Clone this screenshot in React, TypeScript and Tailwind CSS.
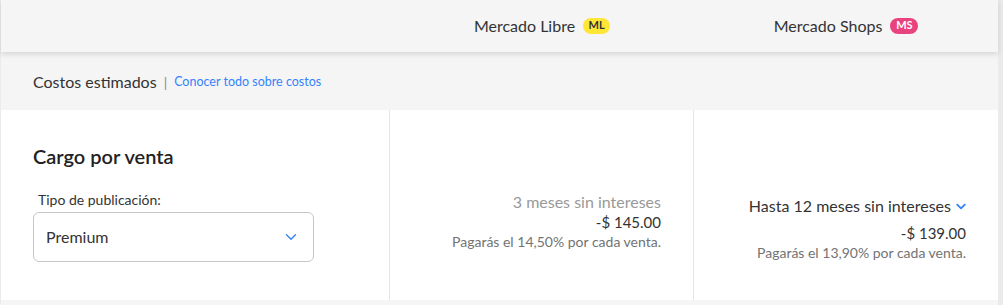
import React from "react";

const font = { fontFamily: "Lato, 'Open Sans', sans-serif" };

function Chevron({ className, sw = 1.4 }: { className?: string; sw?: number }) {
  return (
    <svg viewBox="0 0 12 8" className={className} fill="none" stroke="currentColor" strokeWidth={sw} strokeLinecap="round" strokeLinejoin="round">
      <path d="M1.5 1.8 6 6.2l4.5-4.4" />
    </svg>
  );
}

export default function App() {
  return (
    <div className="w-[1003px] h-[305px] bg-[#ebebeb] overflow-hidden text-[#333]" style={font}>
      <div className="ml-[1px] w-[997px] h-[305px] bg-[#f5f5f5] flex flex-col">
        <div className="relative z-10 h-[52px] shrink-0 bg-[#f5f5f5] shadow-[0_2px_6px_rgba(0,0,0,0.14)] grid grid-cols-[389px_304px_304px]">
          <div />
          <div className="flex items-center justify-center gap-[8px] pb-[1px]">
            <span className="text-[16px]">Mercado Libre</span>
            <span className="h-[16px] w-[27px] rounded-full bg-[#ffe637] text-[11px] font-bold text-[#333] flex items-center justify-center">ML</span>
          </div>
          <div className="flex items-center justify-center gap-[8px] pb-[1px]">
            <span className="text-[16px]">Mercado Shops</span>
            <span className="h-[16px] w-[28px] rounded-full bg-[#e8437f] text-[11px] font-bold text-white flex items-center justify-center">MS</span>
          </div>
        </div>
        <div className="mt-[3px] rounded-t-[6px] bg-[#f5f5f5] flex flex-col">
          <div className="h-[55px] flex items-center pl-[32px] pb-[1px]">
            <span className="text-[16px] text-[#333]">Costos estimados</span>
            <span className="mx-[7px] text-[14px] text-[#888]">|</span>
            <span className="text-[12.5px] text-[#3483fa]">Conocer todo sobre costos</span>
          </div>
          <div className="h-[190px] bg-white grid grid-cols-[389px_304px_304px]">
            <div className="border-r border-[#e5e5e5] pl-[32px] pt-[34px]">
              <div className="text-[20px] font-semibold leading-[24px] text-[#222]">Cargo por venta</div>
              <div className="mt-[24px] ml-[5px] text-[14px] leading-[16px] text-[#333]">Tipo de publicación:</div>
              <div className="mt-[4px] w-[281px] h-[50px] rounded-[6px] border border-[#c7c7c7] flex items-center justify-between pl-[12px] pr-[16px]">
                <span className="text-[16px] text-[#333]">Premium</span>
                <Chevron className="w-[12px] h-[8px] text-[#3483fa]" />
              </div>
            </div>
            <div className="border-r border-[#e5e5e5] pr-[32px] pt-[82px] flex flex-col items-end">
              <div className="text-[16px] leading-[20px] text-[#999]">3 meses sin intereses</div>
              <div className="text-[15px] leading-[20px] text-[#333]">-$ 145.00</div>
              <div className="text-[14px] leading-[20px] text-[#737373]">Pagarás el 14,50% por cada venta.</div>
            </div>
            <div className="pr-[32px] pt-[86px] flex flex-col items-end">
              <div className="flex items-center gap-[5px] text-[16px] leading-[20px] text-[#333]">
                <span>Hasta 12 meses sin intereses</span>
                <Chevron className="w-[10px] h-[7px] text-[#3483fa]" sw={2.2} />
              </div>
              <div className="mt-[7px] text-[15px] leading-[20px] text-[#333]">-$ 139.00</div>
              <div className="text-[14px] leading-[20px] text-[#737373]">Pagarás el 13,90% por cada venta.</div>
            </div>
          </div>
        </div>
      </div>
    </div>
  );
}
